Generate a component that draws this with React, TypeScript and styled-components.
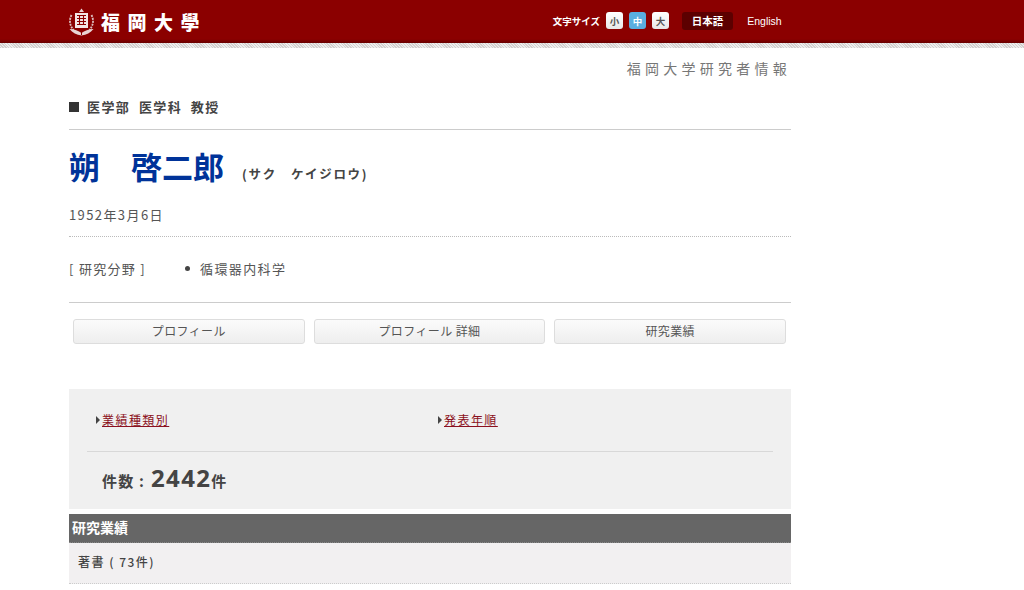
import React from "react";
import styled, { createGlobalStyle } from "styled-components";

const cjk = `"Noto Sans CJK JP", "Noto Sans", sans-serif`;

const Global = createGlobalStyle`
  html, body { margin: 0; padding: 0; background: #fff; }
  body { font-family: ${cjk}; color: #444; overflow: hidden; height: 590px; }
`;

const Header = styled.header`
  height: 43px;
  background: linear-gradient(#8b0000 0, #8b0000 39px, #6a0000 43px);
`;

const Hatch = styled.div`
  height: 5px;
  background: repeating-linear-gradient(45deg, #d4d0cf 0 1px, #eeeeee 1px 2px);
`;

const HeaderInner = styled.div`
  width: 722px;
  height: 43px;
  margin-left: 69px;
  display: flex;
  align-items: center;
  justify-content: space-between;
`;

const Brand = styled.div`
  display: flex;
  align-items: center;
  gap: 7px;
`;

const BrandName = styled.span`
  color: #fff;
  font-family: "Noto Sans CJK JP", serif;
  font-size: 19px;
  font-weight: 900;
  letter-spacing: 7.5px;
  line-height: 20px;
  width: 100px;
  white-space: nowrap;
`;

const Tools = styled.div`
  display: flex;
  align-items: center;
  padding-bottom: 2px;
`;

const SizeLabel = styled.span`
  color: #fff;
  font-size: 9.5px;
  font-weight: 700;
  margin-right: 6px;
`;

const SizeButton = styled.span<{ $active?: boolean }>`
  width: 17px;
  height: 17px;
  margin-right: 6px;
  border-radius: 3px;
  display: flex;
  align-items: center;
  justify-content: center;
  font-size: 9.5px;
  font-weight: 700;
  color: ${(p) => (p.$active ? "#fff" : "#555")};
  background: ${(p) => (p.$active ? "#5aaee0" : "linear-gradient(#fff, #e8e8e8)")};
`;

const LangGroup = styled.div`
  display: flex;
  margin-left: 7px;
  margin-right: -3px;
`;

const LangItem = styled.span<{ $active?: boolean }>`
  width: ${(p) => (p.$active ? "51px" : "59px")};
  height: 18px;
  margin-right: ${(p) => (p.$active ? "2px" : "0")};
  border-radius: 3px;
  display: flex;
  align-items: center;
  justify-content: center;
  font-size: 10.5px;
  font-weight: ${(p) => (p.$active ? 700 : 400)};
  font-family: "Liberation Sans", ${cjk};
  color: #fff;
  background: ${(p) => (p.$active ? "#5c0000" : "transparent")};
`;

const Main = styled.main`
  width: 722px;
  margin-left: 69px;
`;

const SiteTitle = styled.div`
  padding-top: 11px;
  height: 18px;
  line-height: 18px;
  text-align: right;
  font-size: 14px;
  letter-spacing: 4.25px;
  color: #777;
`;

const Affiliation = styled.div`
  margin-top: 21px;
  padding-bottom: 13px;
  border-bottom: 1px solid #ccc;
  display: flex;
  align-items: center;
  font-size: 13px;
  line-height: 18px;
  font-weight: 700;
  letter-spacing: 1.4px;
  color: #444;
  white-space: pre;
`;

const Square = styled.span`
  width: 10px;
  height: 10px;
  margin-right: 8px;
  background: #333;
`;

const NameRow = styled.div`
  margin-top: 15px;
  display: flex;
  align-items: flex-end;
  height: 42px;
`;

const Name = styled.h1`
  margin: 0;
  font-size: 31px;
  line-height: 42px;
  font-weight: 700;
  color: #003399;
  white-space: pre;
`;

const Kana = styled.span`
  margin-left: 18px;
  margin-bottom: 4px;
  font-size: 12.5px;
  line-height: 18px;
  font-weight: 700;
  letter-spacing: 1.7px;
  color: #444;
  white-space: pre;
`;

const Birth = styled.div`
  margin-top: 18px;
  padding-bottom: 11px;
  border-bottom: 1px dotted #bbb;
  font-size: 13px;
  line-height: 20px;
  letter-spacing: 1.4px;
  color: #555;
`;

const FieldRow = styled.div`
  display: flex;
  padding: 22px 0 23px;
  border-bottom: 1px solid #ccc;
  height: 20px;
`;

const FieldLabel = styled.div`
  width: 116px;
  font-size: 13px;
  line-height: 20px;
  letter-spacing: 1.3px;
  color: #555;
  white-space: pre;
`;

const FieldItem = styled.div`
  display: flex;
  align-items: center;
  height: 18px;
  font-size: 13px;
  letter-spacing: 1.4px;
  color: #555;
`;

const Bullet = styled.span`
  width: 5px;
  height: 5px;
  margin-right: 10px;
  border-radius: 50%;
  background: #444;
`;

const Tabs = styled.nav`
  display: flex;
  gap: 9px;
  padding: 16px 5px 0 4px;
`;

const Tab = styled.a`
  flex: 1;
  height: 25px;
  box-sizing: border-box;
  padding-bottom: 2px;
  border: 1px solid #ddd;
  border-radius: 3px;
  display: flex;
  align-items: center;
  justify-content: center;
  font-size: 12px;
  letter-spacing: 0.4px;
  color: #555;
  background: linear-gradient(#fbfbfb, #eee);
`;

const Summary = styled.section`
  margin-top: 45px;
  height: 120px;
  background: #f0f0f0;
  padding: 0 18px;
`;

const LinkRow = styled.div`
  display: flex;
  height: 63px;
  border-bottom: 1px solid #d8d8d8;
  align-items: center;
  padding-left: 9px;
  box-sizing: border-box;
`;

const LinkCell = styled.div`
  flex: 0 0 342px;
  display: flex;
  align-items: center;
`;

const Arrow = styled.span`
  width: 0;
  height: 0;
  margin-right: 2px;
  border-left: 4px solid #444;
  border-top: 4px solid transparent;
  border-bottom: 4px solid transparent;
`;

const RecordLink = styled.a`
  font-size: 12px;
  letter-spacing: 1.45px;
  line-height: 18px;
  color: #8b1020;
  text-decoration: underline;
`;

const CountRow = styled.div`
  display: flex;
  align-items: baseline;
  padding-left: 15px;
  height: 57px;
  line-height: 52px;
  font-weight: 700;
  font-size: 15px;
  color: #444;
  letter-spacing: 1.2px;
  white-space: pre;
`;

const CountValue = styled.span`
  font-family: "Noto Sans", sans-serif;
  font-size: 24px;
  letter-spacing: 1.3px;
  margin-left: 6px;
`;

const SectionBar = styled.div`
  margin-top: 5px;
  height: 28px;
  border-bottom: 1px dotted #888;
  padding-left: 3px;
  line-height: 27px;
  font-size: 14px;
  font-weight: 700;
  color: #fff;
  background: #666;
`;

const SectionRow = styled.div`
  height: 40px;
  border-bottom: 1px dotted #ccc;
  padding-left: 9px;
  line-height: 38px;
  font-size: 12px;
  font-weight: 500;
  letter-spacing: 1.5px;
  color: #444;
  background: #f2f0f1;
  white-space: pre;
`;

const Crest = () => (
  <svg width="25" height="28" viewBox="0 0 25 28" fill="none">
    <path d="M12.500 0.500l2.500 3.500h-5z" fill="#e9d4d4" />
    <path d="M2.500 7c-2.500 5-2 10 2 15M22.500 7c2.500 5 2 10-2 15" stroke="#dcbcbc" strokeWidth="1.800" strokeDasharray="2 1" />
    <rect x="6" y="5" width="13" height="15" fill="#f3e6e6" />
    <path d="M8 7.500h9M8 10.500h9M8 13.500h9M8 16.500h9M10.500 7v10M14.500 7v10" stroke="#8b0000" strokeWidth="1.100" />
    <path d="M0.500 21c5 0 9 2 12 4 3-2 7-4 12-4-3 3.500-7 6-12 6.500-5-0.500-9-3-12-6.500z" fill="#e9d4d4" />
    <path d="M12.500 20v7" stroke="#8b0000" strokeWidth="1" />
  </svg>
);

export default function App() {
  return (
    <>
      <Global />
      <Header>
        <HeaderInner>
          <Brand>
            <Crest />
            <BrandName>福岡大學</BrandName>
          </Brand>
          <Tools>
            <SizeLabel>文字サイズ</SizeLabel>
            <SizeButton>小</SizeButton>
            <SizeButton $active>中</SizeButton>
            <SizeButton>大</SizeButton>
            <LangGroup>
              <LangItem $active>日本語</LangItem>
              <LangItem>English</LangItem>
            </LangGroup>
          </Tools>
        </HeaderInner>
      </Header>
      <Hatch />
      <Main>
        <SiteTitle>福岡大学研究者情報</SiteTitle>
        <Affiliation>
          <Square />
          医学部  医学科  教授
        </Affiliation>
        <NameRow>
          <Name>朔　啓二郎</Name>
          <Kana>(サク　ケイジロウ)</Kana>
        </NameRow>
        <Birth>1952年3月6日</Birth>
        <FieldRow>
          <FieldLabel>[ 研究分野 ]</FieldLabel>
          <FieldItem>
            <Bullet />
            循環器内科学
          </FieldItem>
        </FieldRow>
        <Tabs>
          <Tab>プロフィール</Tab>
          <Tab>プロフィール 詳細</Tab>
          <Tab>研究業績</Tab>
        </Tabs>
        <Summary>
          <LinkRow>
            <LinkCell>
              <Arrow />
              <RecordLink>業績種類別</RecordLink>
            </LinkCell>
            <LinkCell>
              <Arrow />
              <RecordLink>発表年順</RecordLink>
            </LinkCell>
          </LinkRow>
          <CountRow>
            件数 :<CountValue>2442</CountValue>件
          </CountRow>
        </Summary>
        <SectionBar>研究業績</SectionBar>
        <SectionRow>著書 ( 73件)</SectionRow>
      </Main>
    </>
  );
}
